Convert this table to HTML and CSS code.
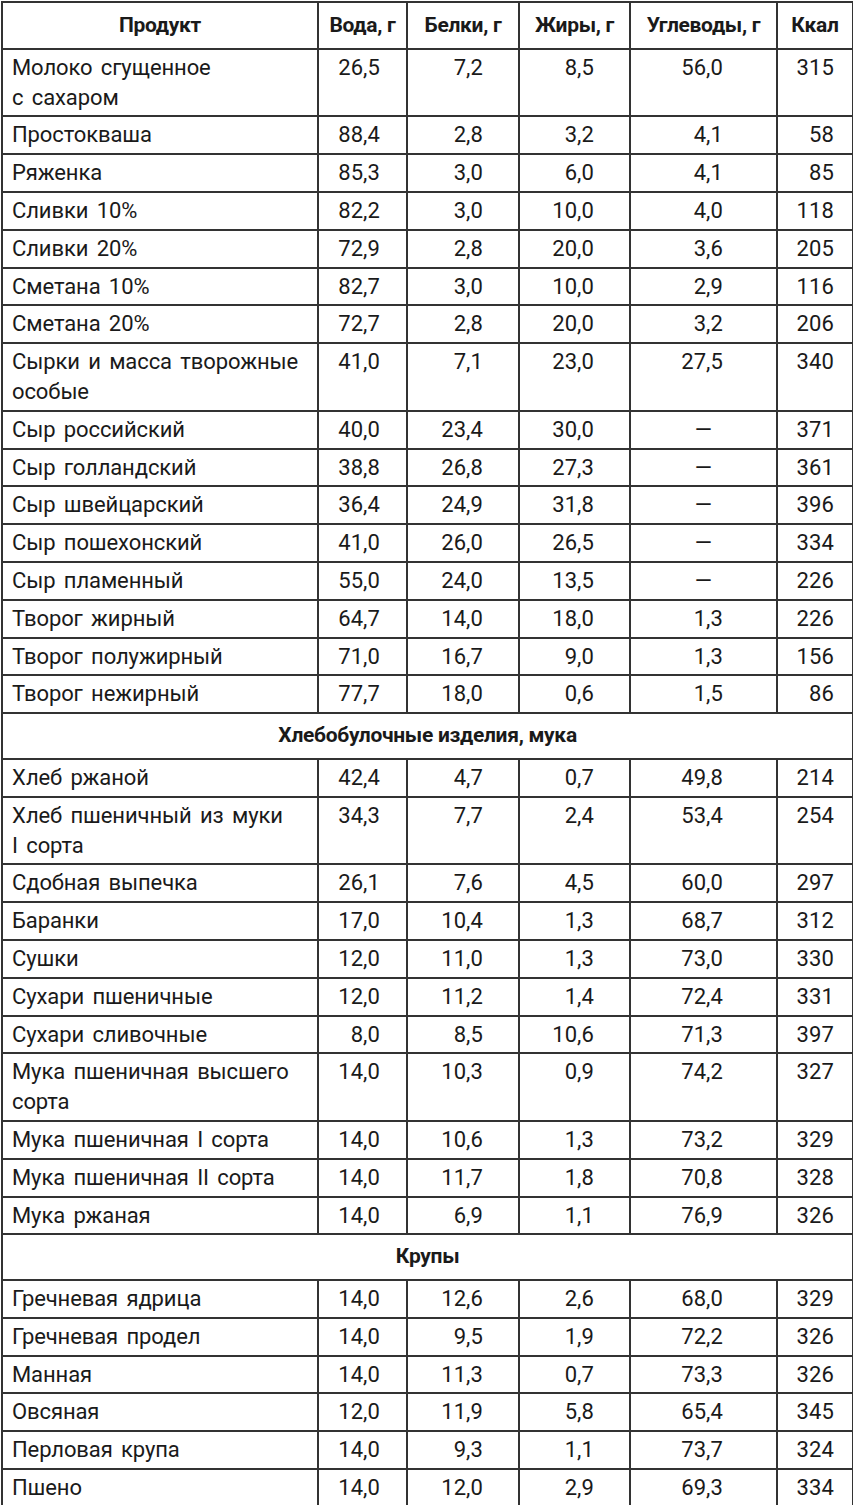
FILE: index.html
```html
<!DOCTYPE html>
<html lang="ru">
<head>
<meta charset="utf-8">
<title>Пищевая ценность продуктов</title>
<link rel="stylesheet" href="styles.css">
</head>
<body>
<table class="nutri">
<colgroup>
<col class="c-name"><col class="c-water"><col class="c-prot"><col class="c-fat"><col class="c-carb"><col class="c-kcal">
</colgroup>
<thead>
<tr><th>Продукт</th><th>Вода, г</th><th>Белки, г</th><th>Жиры, г</th><th>Углеводы, г</th><th>Ккал</th></tr>
</thead>
<tbody>
<tr><td class="name">Молоко сгущенное<br>с сахаром</td><td class="w">26,5</td><td class="p">7,2</td><td class="f">8,5</td><td class="c">56,0</td><td class="k">315</td></tr>
<tr><td class="name">Простокваша</td><td class="w">88,4</td><td class="p">2,8</td><td class="f">3,2</td><td class="c">4,1</td><td class="k">58</td></tr>
<tr><td class="name">Ряженка</td><td class="w">85,3</td><td class="p">3,0</td><td class="f">6,0</td><td class="c">4,1</td><td class="k">85</td></tr>
<tr><td class="name">Сливки 10%</td><td class="w">82,2</td><td class="p">3,0</td><td class="f">10,0</td><td class="c">4,0</td><td class="k">118</td></tr>
<tr><td class="name">Сливки 20%</td><td class="w">72,9</td><td class="p">2,8</td><td class="f">20,0</td><td class="c">3,6</td><td class="k">205</td></tr>
<tr><td class="name">Сметана 10%</td><td class="w">82,7</td><td class="p">3,0</td><td class="f">10,0</td><td class="c">2,9</td><td class="k">116</td></tr>
<tr><td class="name">Сметана 20%</td><td class="w">72,7</td><td class="p">2,8</td><td class="f">20,0</td><td class="c">3,2</td><td class="k">206</td></tr>
<tr><td class="name">Сырки и масса творожные<br>особые</td><td class="w">41,0</td><td class="p">7,1</td><td class="f">23,0</td><td class="c">27,5</td><td class="k">340</td></tr>
<tr><td class="name">Сыр российский</td><td class="w">40,0</td><td class="p">23,4</td><td class="f">30,0</td><td class="c dash">—</td><td class="k">371</td></tr>
<tr><td class="name">Сыр голландский</td><td class="w">38,8</td><td class="p">26,8</td><td class="f">27,3</td><td class="c dash">—</td><td class="k">361</td></tr>
<tr><td class="name">Сыр швейцарский</td><td class="w">36,4</td><td class="p">24,9</td><td class="f">31,8</td><td class="c dash">—</td><td class="k">396</td></tr>
<tr><td class="name">Сыр пошехонский</td><td class="w">41,0</td><td class="p">26,0</td><td class="f">26,5</td><td class="c dash">—</td><td class="k">334</td></tr>
<tr><td class="name">Сыр пламенный</td><td class="w">55,0</td><td class="p">24,0</td><td class="f">13,5</td><td class="c dash">—</td><td class="k">226</td></tr>
<tr><td class="name">Творог жирный</td><td class="w">64,7</td><td class="p">14,0</td><td class="f">18,0</td><td class="c">1,3</td><td class="k">226</td></tr>
<tr><td class="name">Творог полужирный</td><td class="w">71,0</td><td class="p">16,7</td><td class="f">9,0</td><td class="c">1,3</td><td class="k">156</td></tr>
<tr><td class="name">Творог нежирный</td><td class="w">77,7</td><td class="p">18,0</td><td class="f">0,6</td><td class="c">1,5</td><td class="k">86</td></tr>
<tr class="section"><td colspan="6">Хлебобулочные изделия, мука</td></tr>
<tr><td class="name">Хлеб ржаной</td><td class="w">42,4</td><td class="p">4,7</td><td class="f">0,7</td><td class="c">49,8</td><td class="k">214</td></tr>
<tr><td class="name">Хлеб пшеничный из муки<br>I сорта</td><td class="w">34,3</td><td class="p">7,7</td><td class="f">2,4</td><td class="c">53,4</td><td class="k">254</td></tr>
<tr><td class="name">Сдобная выпечка</td><td class="w">26,1</td><td class="p">7,6</td><td class="f">4,5</td><td class="c">60,0</td><td class="k">297</td></tr>
<tr><td class="name">Баранки</td><td class="w">17,0</td><td class="p">10,4</td><td class="f">1,3</td><td class="c">68,7</td><td class="k">312</td></tr>
<tr><td class="name">Сушки</td><td class="w">12,0</td><td class="p">11,0</td><td class="f">1,3</td><td class="c">73,0</td><td class="k">330</td></tr>
<tr><td class="name">Сухари пшеничные</td><td class="w">12,0</td><td class="p">11,2</td><td class="f">1,4</td><td class="c">72,4</td><td class="k">331</td></tr>
<tr><td class="name">Сухари сливочные</td><td class="w">8,0</td><td class="p">8,5</td><td class="f">10,6</td><td class="c">71,3</td><td class="k">397</td></tr>
<tr><td class="name">Мука пшеничная высшего<br>сорта</td><td class="w">14,0</td><td class="p">10,3</td><td class="f">0,9</td><td class="c">74,2</td><td class="k">327</td></tr>
<tr><td class="name">Мука пшеничная I сорта</td><td class="w">14,0</td><td class="p">10,6</td><td class="f">1,3</td><td class="c">73,2</td><td class="k">329</td></tr>
<tr><td class="name">Мука пшеничная II сорта</td><td class="w">14,0</td><td class="p">11,7</td><td class="f">1,8</td><td class="c">70,8</td><td class="k">328</td></tr>
<tr><td class="name">Мука ржаная</td><td class="w">14,0</td><td class="p">6,9</td><td class="f">1,1</td><td class="c">76,9</td><td class="k">326</td></tr>
<tr class="section"><td colspan="6">Крупы</td></tr>
<tr><td class="name">Гречневая ядрица</td><td class="w">14,0</td><td class="p">12,6</td><td class="f">2,6</td><td class="c">68,0</td><td class="k">329</td></tr>
<tr><td class="name">Гречневая продел</td><td class="w">14,0</td><td class="p">9,5</td><td class="f">1,9</td><td class="c">72,2</td><td class="k">326</td></tr>
<tr><td class="name">Манная</td><td class="w">14,0</td><td class="p">11,3</td><td class="f">0,7</td><td class="c">73,3</td><td class="k">326</td></tr>
<tr><td class="name">Овсяная</td><td class="w">12,0</td><td class="p">11,9</td><td class="f">5,8</td><td class="c">65,4</td><td class="k">345</td></tr>
<tr><td class="name">Перловая крупа</td><td class="w">14,0</td><td class="p">9,3</td><td class="f">1,1</td><td class="c">73,7</td><td class="k">324</td></tr>
<tr><td class="name">Пшено</td><td class="w">14,0</td><td class="p">12,0</td><td class="f">2,9</td><td class="c">69,3</td><td class="k">334</td></tr>
</tbody>
</table>
</body>
</html>
```
FILE: styles.css
```css
html, body {
  margin: 0;
  padding: 0;
  background: #ffffff;
}

body {
  padding: 1px 0 0 1px;
  font-family: Roboto, "Liberation Sans", sans-serif;
  color: #1a1a1a;
}

.nutri {
  border-collapse: collapse;
  table-layout: fixed;
  width: 851px;
  font-size: 22px;
  line-height: 29.8px;
  letter-spacing: 0.1px;
}

.c-name { width: 316px; }
.c-water { width: 89px; }
.c-prot { width: 112px; }
.c-fat { width: 111px; }
.c-carb { width: 147px; }
.c-kcal { width: 76px; }

.nutri th,
.nutri td {
  border: 2px solid #333333;
  padding: 3px 0 3px 0;
  vertical-align: top;
  white-space: nowrap;
}

.nutri th {
  font-weight: bold;
  font-size: 21px;
  text-align: center;
  padding-top: 8px;
  padding-bottom: 7px;
  letter-spacing: -0.3px;
}

.nutri td.name {
  padding-left: 9px;
  text-align: left;
  letter-spacing: -0.1px;
  word-spacing: 3px;
}

.nutri td.w { text-align: right; padding-right: 26px; }
.nutri td.p { text-align: right; padding-right: 35px; }
.nutri td.f { text-align: right; padding-right: 35px; }
.nutri td.c { text-align: right; padding-right: 53px; }
.nutri td.k { text-align: right; padding-right: 18px; }
.nutri td.dash { text-align: center; padding-right: 0; }

.nutri tr.section td {
  text-align: center;
  font-weight: bold;
  font-size: 21px;
  padding-top: 7px;
  padding-bottom: 7px;
  letter-spacing: -0.3px;
}
```
